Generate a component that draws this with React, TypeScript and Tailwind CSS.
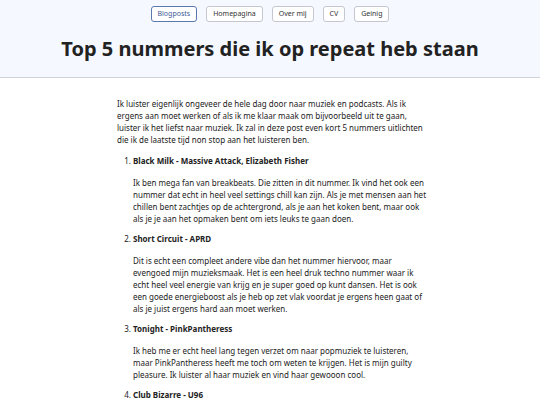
import React from "react";

const font = { fontFamily: '"Noto Sans", "Open Sans", sans-serif' };

export default function App() {
  const nav = ["Blogposts", "Homepagina", "Over mij", "CV", "Geinig"];
  return (
    <div className="min-h-[405px] bg-white text-[#222]" style={font}>
      <header className="bg-[#f5f8ff] border-b border-[#cfd2d8] h-[78px] flex flex-col items-center">
        <nav className="flex gap-[9px] pt-[6px]">
          {nav.map((n, i) => (
            <span
              key={n}
              className={
                "h-[16px] px-[6px] flex items-center rounded-[3px] border text-[7px] " +
                (i === 0
                  ? "border-[#5b78b0] text-[#3b5a96] bg-white"
                  : "border-[#c4c7cf] text-[#333] bg-white")
              }
            >
              {n}
            </span>
          ))}
        </nav>
        <h1 className="text-[20px] font-bold mt-[13px] leading-[28px] text-[#222]">
          Top 5 nummers die ik op repeat heb staan
        </h1>
      </header>
      <main className="ml-[117px] w-[310px] pt-[20px] text-[8px] leading-[12px]">
        <p>
          Ik luister eigenlijk ongeveer de hele dag door naar muziek en podcasts. Als ik ergens aan moet
          werken of als ik me klaar maak om bijvoorbeeld uit te gaan, luister ik het liefst naar muziek. Ik
          zal in deze post even kort 5 nummers uitlichten die ik de laatste tijd non stop aan het luisteren
          ben.
        </p>
        <ol className="list-decimal pl-[16px] mt-[9px]">
          <li className="mb-[8px]">
            <strong>Black Milk - Massive Attack, Elizabeth Fisher</strong>
            <p className="mt-[10px]">
              Ik ben mega fan van breakbeats. Die zitten in dit nummer. Ik vind het ook een nummer dat echt in
              heel veel settings chill kan zijn. Als je met mensen aan het chillen bent zachtjes op de
              achtergrond, als je aan het koken bent, maar ook als je je aan het opmaken bent om iets leuks te
              gaan doen.
            </p>
          </li>
          <li className="mb-[8px]">
            <strong>Short Circuit - APRD</strong>
            <p className="mt-[10px]">
              Dit is echt een compleet andere vibe dan het nummer hiervoor, maar evengoed mijn muzieksmaak. Het
              is een heel druk techno nummer waar ik echt heel veel energie van krijg en je super goed op kunt
              dansen. Het is ook een goede energieboost als je heb op zet vlak voordat je ergens heen gaat of
              als je juist ergens hard aan moet werken.
            </p>
          </li>
          <li className="mb-[8px]">
            <strong>Tonight - PinkPantheress</strong>
            <p className="mt-[10px]">
              Ik heb me er echt heel lang tegen verzet om naar popmuziek te luisteren, maar PinkPantheress
              heeft me toch om weten te krijgen. Het is mijn guilty pleasure. Ik luister al haar muziek en vind
              haar gewooon cool.
            </p>
          </li>
          <li className="mb-[8px]">
            <strong>Club Bizarre - U96</strong>
          </li>
        </ol>
      </main>
    </div>
  );
}
